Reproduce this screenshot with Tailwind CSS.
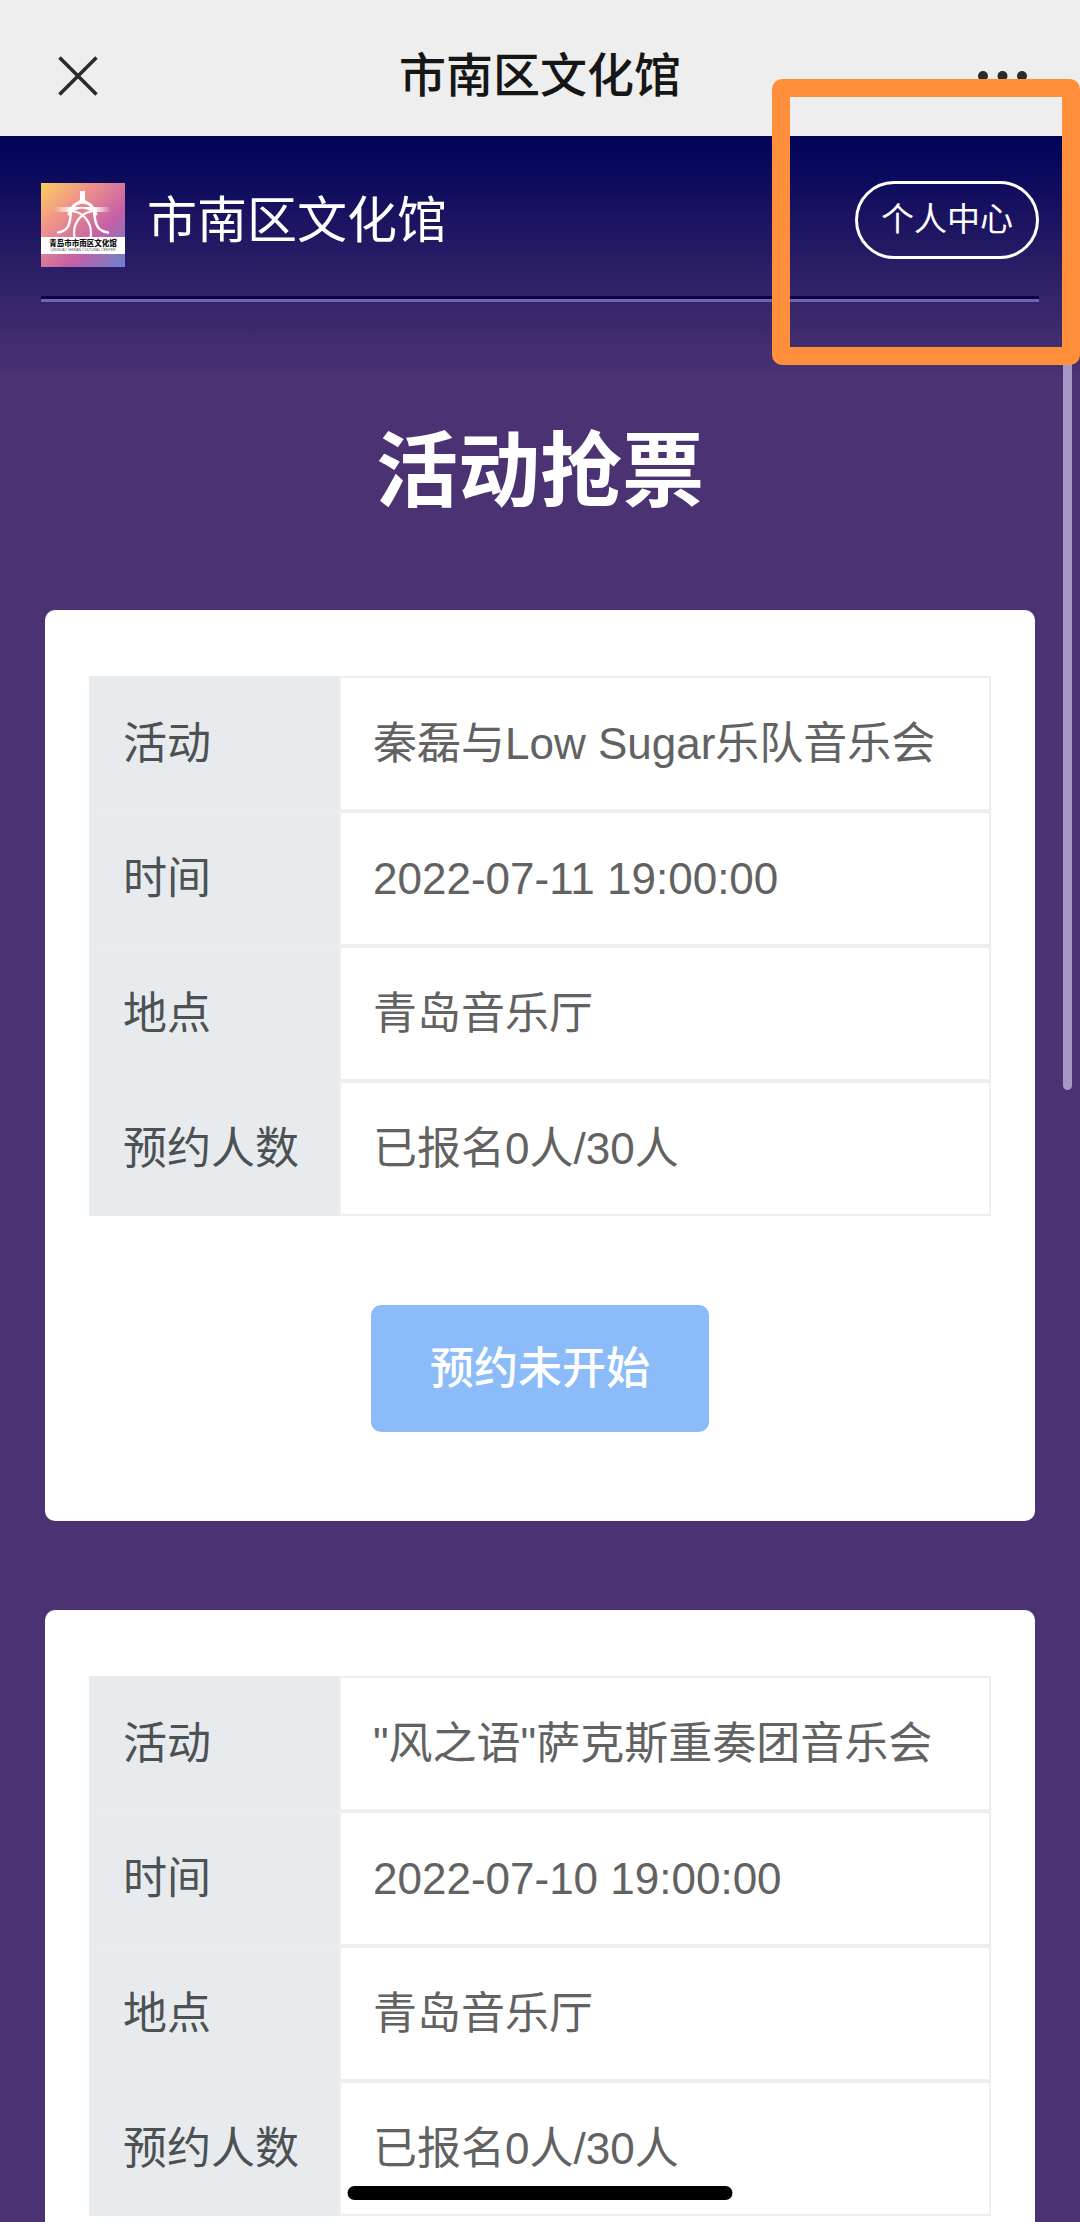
<!DOCTYPE html>
<html lang="zh-CN">
<head>
<meta charset="utf-8">
<meta name="viewport" content="width=device-width, initial-scale=1">
<title>市南区文化馆</title>
<script src="https://cdn.jsdelivr.net/npm/@tailwindcss/browser@4"></script>
</head>
<body class="relative flex h-screen flex-col overflow-hidden bg-[#4a3273] font-['Liberation_Sans','Noto_Sans_CJK_SC',sans-serif]">
  <!-- Browser title bar -->
  <div class="grid h-[136px] shrink-0 grid-cols-3 items-center bg-[#eeeeee] px-[53px] pt-4 text-[#161616]">
    <button type="button" aria-label="关闭" class="h-10 w-[50px] px-[5px]">
      <svg viewBox="0 0 40 40" class="size-10" fill="none" stroke="#2b2b2b" stroke-width="3.6"><path d="M1.5 1.5 38.5 38.5M38.5 1.5 1.5 38.5"/></svg>
    </button>
    <p class="text-center text-[47px] leading-[60px] font-medium whitespace-nowrap">市南区文化馆</p>
    <button type="button" aria-label="更多" class="h-10 w-[50px] justify-self-end">
      <svg viewBox="0 0 50 40" class="h-10 w-[50px]" fill="#2b2b2b"><circle cx="6" cy="20" r="5"/><circle cx="25.500" cy="20" r="5"/><circle cx="45" cy="20" r="5"/></svg>
    </button>
  </div>

  <div class="flex-1 overflow-hidden bg-[linear-gradient(#03035a_0px,#07075b_24px,#352569_165px,#4a3273_240px)]">
    <header class="px-[41px] pt-[45px]">
      <div class="flex items-end justify-between pb-[29px]">
        <a href="#" class="flex items-center gap-[22px] text-white">
          <svg viewBox="0 0 84 84" class="size-[84px]" role="img" aria-label="青岛市市南区文化馆">
            <defs>
              <linearGradient id="sky" x1="0" y1="0" x2="1" y2="1">
                <stop offset="0" stop-color="#fbcf5c"/><stop offset=".3" stop-color="#f0948a"/><stop offset=".65" stop-color="#c55fa6"/><stop offset="1" stop-color="#6684cf"/>
              </linearGradient>
              <linearGradient id="ray" x1="0" x2="1">
                <stop offset="0" stop-color="#fff" stop-opacity="0"/><stop offset=".3" stop-color="#fff"/><stop offset=".7" stop-color="#fff"/><stop offset="1" stop-color="#fff" stop-opacity="0"/>
              </linearGradient>
            </defs>
            <rect width="84" height="84" fill="url(#sky)"/>
            <rect x="13" y="24" width="57" height="5" fill="url(#ray)"/>
            <path d="M31 29.500Q41 22 52 29.500L41.500 32Z" fill="#e8828c"/>
            <path d="M39 8h5v8l2 4H37l2-4z" fill="#fff"/>
            <g fill="none" stroke="#fff" stroke-linecap="round">
              <path d="M28 31C31 23 35 19 41.500 19S52 23 55 31" stroke-width="3"/>
              <path d="M30 28C29 41 28 48 17 49.500M53 28C54 41 56 48 67 49.500" stroke-width="2.500"/>
              <path d="M29 28C41 28 50 38 50 50Q50 53 49 56M54 28C42 28 33 38 33 50Q33 53 34 56" stroke-width="2.200"/>
            </g>
            <rect y="54" width="84" height="17" fill="#fff"/>
            <text x="42" y="63" text-anchor="middle" font-size="7.500" font-weight="900" fill="#111" font-family="Noto Sans CJK SC, sans-serif">青岛市市南区文化馆</text>
            <text x="42" y="68" text-anchor="middle" font-size="3.500" fill="#555" font-family="Liberation Sans, sans-serif">QINGDAO SHINAN CULTURAL CENTER</text>
          </svg>
          <span class="pb-2 text-[50px] leading-[60px]">市南区文化馆</span>
        </a>
        <a href="#" class="mb-2 flex h-[78px] items-center rounded-full border-[3px] border-white px-[23px] text-[33px] leading-[40px] text-white">个人中心</a>
      </div>
      <div class="h-[6px] border-b-[3px] border-[#7361b4] bg-[#0c024c]"></div>
    </header>

    <main class="px-[45px]">
      <h1 class="pt-[124px] pb-[92px] text-center text-[82px] leading-[92px] font-bold text-white">活动抢票</h1>

      <section class="rounded-[10px] bg-white px-11 pt-[66px] pb-[89px]">
        <table class="w-full border-separate border-spacing-0 text-left text-[44px] leading-[60px] text-[#626262]">
          <tbody>
            <tr><th scope="row" class="h-[135px] w-[250px] border-2 border-[#e9ecee] bg-[#e7ebee] px-8 font-normal text-[#4c5154]">活动</th><td class="border-2 border-[#eeeeee] px-8 whitespace-nowrap">秦磊与Low Sugar乐队音乐会</td></tr>
            <tr><th scope="row" class="h-[135px] border-2 border-[#e9ecee] bg-[#e7ebee] px-8 font-normal text-[#4c5154]">时间</th><td class="border-2 border-[#eeeeee] px-8">2022-07-11 19:00:00</td></tr>
            <tr><th scope="row" class="h-[135px] border-2 border-[#e9ecee] bg-[#e7ebee] px-8 font-normal text-[#4c5154]">地点</th><td class="border-2 border-[#eeeeee] px-8">青岛音乐厅</td></tr>
            <tr><th scope="row" class="h-[135px] border-2 border-[#e9ecee] bg-[#e7ebee] px-8 font-normal whitespace-nowrap text-[#4c5154]">预约人数</th><td class="border-2 border-[#eeeeee] px-8">已报名0人/30人</td></tr>
          </tbody>
        </table>
        <button type="button" disabled class="mx-auto mt-[89px] block h-[127px] rounded-[10px] bg-[#8bbbf8] px-[59px] text-[44px] leading-[60px] font-medium text-white">预约未开始</button>
      </section>

      <section class="mt-[89px] rounded-[10px] bg-white px-11 pt-[66px] pb-[89px]">
        <table class="w-full border-separate border-spacing-0 text-left text-[44px] leading-[60px] text-[#626262]">
          <tbody>
            <tr><th scope="row" class="h-[135px] w-[250px] border-2 border-[#e9ecee] bg-[#e7ebee] px-8 font-normal text-[#4c5154]">活动</th><td class="border-2 border-[#eeeeee] px-8 whitespace-nowrap">"风之语"萨克斯重奏团音乐会</td></tr>
            <tr><th scope="row" class="h-[135px] border-2 border-[#e9ecee] bg-[#e7ebee] px-8 font-normal text-[#4c5154]">时间</th><td class="border-2 border-[#eeeeee] px-8">2022-07-10 19:00:00</td></tr>
            <tr><th scope="row" class="h-[135px] border-2 border-[#e9ecee] bg-[#e7ebee] px-8 font-normal text-[#4c5154]">地点</th><td class="border-2 border-[#eeeeee] px-8">青岛音乐厅</td></tr>
            <tr><th scope="row" class="h-[135px] border-2 border-[#e9ecee] bg-[#e7ebee] px-8 font-normal whitespace-nowrap text-[#4c5154]">预约人数</th><td class="border-2 border-[#eeeeee] px-8">已报名0人/30人</td></tr>
          </tbody>
        </table>
      </section>
    </main>
  </div>

  <!-- Scroll thumb, highlight frame and home indicator float over the page -->
  <div class="absolute top-[144px] right-2 h-[946px] w-[9px] rounded-full bg-[#a797c5]"></div>
  <div class="pointer-events-none absolute top-[79px] right-0 h-[286px] w-[308px] rounded-[10px] bg-[#ff8f3a] [clip-path:polygon(evenodd,0_0,100%_0,100%_100%,0_100%,0_0,18px_18px,290px_18px,290px_268px,18px_268px,18px_18px)]"></div>
  <div class="absolute bottom-[22px] left-1/2 h-[14px] w-[385px] -translate-x-1/2 rounded-full bg-black"></div>
</body>
</html>
